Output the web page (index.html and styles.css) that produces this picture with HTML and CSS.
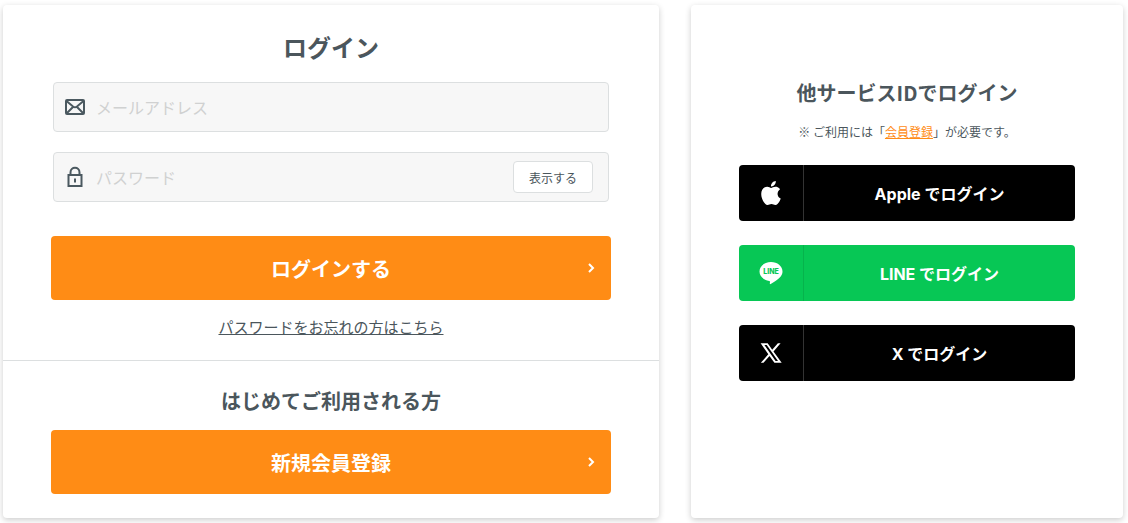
FILE: index.html
```html
<!DOCTYPE html>
<html lang="ja">
<head>
<meta charset="utf-8">
<meta name="viewport" content="width=device-width, initial-scale=1">
<title>ログイン</title>
<link rel="stylesheet" href="styles.css">
</head>
<body>
<main class="page">
  <div class="card">
    <form class="section login">
      <h1 class="title">ログイン</h1>
      <div class="fields">
        <div class="field">
          <svg class="field-icon" viewBox="0 0 22 22" aria-hidden="true"><rect x="2" y="4" width="18" height="14" rx="1"/><path d="M2.5 5l6.500 5.500q2 1.400 4 0L19.500 5M2.500 17.500L9 11M19.500 17.500L13 11"/></svg>
          <input class="input" type="email" aria-label="メールアドレス" placeholder="メールアドレス">
        </div>
        <div class="field">
          <svg class="field-icon" viewBox="0 0 22 22" aria-hidden="true"><rect x="4.500" y="9" width="13" height="11"/><path d="M6.500 9V6.500C6.500 .2 15.500 .2 15.500 6.500V9M11 12.500v4"/></svg>
          <input class="input" type="password" aria-label="パスワード" placeholder="パスワード">
          <button class="reveal" type="button">表示する</button>
        </div>
      </div>
      <button class="primary" type="submit">ログインする
        <svg class="chevron" viewBox="0 0 8 10" aria-hidden="true"><path d="M2 1l4 4-4 4"/></svg>
      </button>
      <a class="forgot" href="#">パスワードをお忘れの方はこちら</a>
    </form>
    <section class="section signup">
      <h2 class="subtitle">はじめてご利用される方</h2>
      <button class="primary" type="button">新規会員登録
        <svg class="chevron" viewBox="0 0 8 10" aria-hidden="true"><path d="M2 1l4 4-4 4"/></svg>
      </button>
    </section>
  </div>
  <section class="card social">
    <h2 class="subtitle">他サービスIDでログイン</h2>
    <p class="note">※ ご利用には「<a class="note-link" href="#">会員登録</a>」が必要です。</p>
    <div class="providers">
      <button class="provider" type="button">
        <span class="provider-icon"><svg class="logo" viewBox="0 0 24 24" aria-hidden="true"><path d="M12.152 6.896c-.948 0-2.415-1.078-3.960-1.040-2.040.027-3.910 1.183-4.961 3.014-2.117 3.675-.546 9.103 1.519 12.090 1.013 1.454 2.208 3.090 3.792 3.039 1.520-.065 2.090-.987 3.935-.987 1.831 0 2.350.987 3.960.948 1.637-.026 2.676-1.480 3.676-2.948 1.156-1.688 1.636-3.325 1.662-3.415-.039-.013-3.182-1.221-3.220-4.857-.026-3.040 2.480-4.494 2.597-4.559-1.429-2.090-3.623-2.324-4.390-2.376-2-.156-3.675 1.090-4.610 1.090zM15.530 3.830c.843-1.012 1.400-2.427 1.245-3.830-1.207.052-2.662.805-3.532 1.818-.780.896-1.454 2.338-1.273 3.714 1.338.104 2.715-.688 3.559-1.701"/></svg></span>
        <span class="provider-label">Apple でログイン</span>
      </button>
      <button class="provider line" type="button">
        <span class="provider-icon"><svg class="logo" viewBox="0 0 24 24" aria-hidden="true"><path d="M12 1C5.600 1 .5 5.200.5 10.500c0 4.700 4.100 8.600 9.700 9.400.6.100.9.500.8 1l-.2 1.700c0 .6.400.7.900.4 2.900-1.600 7.600-4.600 9.800-7.300 1.300-1.500 2-3.300 2-5.200C23.500 5.200 18.400 1 12 1z"/><text class="logo-text" x="12" y="13" text-anchor="middle">LINE</text></svg></span>
        <span class="provider-label">LINE でログイン</span>
      </button>
      <button class="provider" type="button">
        <span class="provider-icon"><svg class="logo" viewBox="0 0 24 24" aria-hidden="true"><path fill-rule="evenodd" d="M14.500 10.400L21.600 2.200h-2.700l-5.700 6.500L8.700 2.200H1.600l7.700 11L1.800 21.800h2.700l6-6.900 4.900 6.900h7.300zM5.400 4h2.300l11.300 16h-2.400z"/></svg></span>
        <span class="provider-label">X でログイン</span>
      </button>
    </div>
  </section>
</main>
</body>
</html>
```
FILE: styles.css
```css
* { box-sizing: border-box; }

body {
  margin: 0;
  background: #fff;
  color: #4b565c;
  font-family: "Noto Sans CJK JP", sans-serif;
}

h1, h2, p { margin: 0; }

button, input { font-family: inherit; color: inherit; }
button { cursor: pointer; }

.page {
  display: grid;
  grid-template-columns: minmax(0, 656fr) minmax(0, 432fr);
  gap: 32px;
  padding: 5px 5px 5px 3px;
}

.card {
  background: #fff;
  border-radius: 4px;
  box-shadow: 0 2px 6px rgba(0, 0, 0, .2);
}

.section {
  display: flex;
  flex-direction: column;
  padding: 24px 48px;
}

.login {
  padding-bottom: 22px;
  border-bottom: 1px solid #dcdfe0;
}

.title {
  margin-bottom: 17px;
  font-size: 24px;
  font-weight: 700;
  line-height: 36px;
  text-align: center;
}

.fields {
  display: grid;
  gap: 20px;
  margin: 0 2px 34px;
}

.field {
  display: flex;
  align-items: center;
  gap: 10px;
  height: 50px;
  padding: 0 15px 0 10px;
  background: #f7f7f7;
  border: 1px solid #dcdfe0;
  border-radius: 4px;
}

.field-icon {
  flex: none;
  width: 22px;
  height: 22px;
  fill: none;
  stroke: #4b5960;
  stroke-width: 2;
}

.input {
  flex: 1;
  min-width: 0;
  height: 48px;
  padding: 0;
  border: 0;
  background: none;
  font-size: 16px;
}

.input::placeholder { color: #d0d1d1; }

.reveal {
  width: 80px;
  height: 32px;
  padding: 0;
  background: #fff;
  border: 1px solid #dcdfe0;
  border-radius: 4px;
  font-size: 12px;
}

.primary {
  display: grid;
  grid-template-columns: 24px 1fr 24px;
  align-items: center;
  height: 64px;
  padding: 0;
  background: #ff8c15;
  border: 0;
  border-radius: 4px;
  color: #fff;
  font-size: 20px;
  font-weight: 700;
}

.primary::before { content: ""; }

.chevron {
  width: 8px;
  height: 10px;
  fill: none;
  stroke: #fff;
  stroke-width: 2;
}

.forgot {
  align-self: center;
  margin-top: 16px;
  color: inherit;
  font-size: 15px;
  line-height: 22px;
}

.subtitle {
  font-size: 20px;
  font-weight: 700;
  line-height: 32px;
  text-align: center;
}

.signup .subtitle { margin-bottom: 13px; }

.social { padding: 72px 48px 48px; }

.note {
  margin: 13px 0 23px;
  font-size: 12px;
  line-height: 20px;
  text-align: center;
}

.note-link { color: #ff8c15; }

.providers {
  display: grid;
  gap: 24px;
}

.provider {
  display: flex;
  align-items: center;
  height: 56px;
  padding: 0;
  overflow: hidden;
  background: #000;
  border: 0;
  border-radius: 4px;
  color: #fff;
}

.line { background: #07c755; }

.provider-icon {
  display: flex;
  align-items: center;
  justify-content: center;
  width: 65px;
  height: 56px;
  border-right: 1px solid #333;
}

.line .provider-icon { border-color: #06b34c; }

.logo {
  width: 24px;
  height: 24px;
  fill: #fff;
}

.logo-text {
  fill: #07c755;
  font: 800 7px Inter, sans-serif;
}

.provider-label {
  flex: 1;
  font-family: Inter, "Noto Sans CJK JP", sans-serif;
  font-size: 16px;
  font-weight: 700;
}
```
